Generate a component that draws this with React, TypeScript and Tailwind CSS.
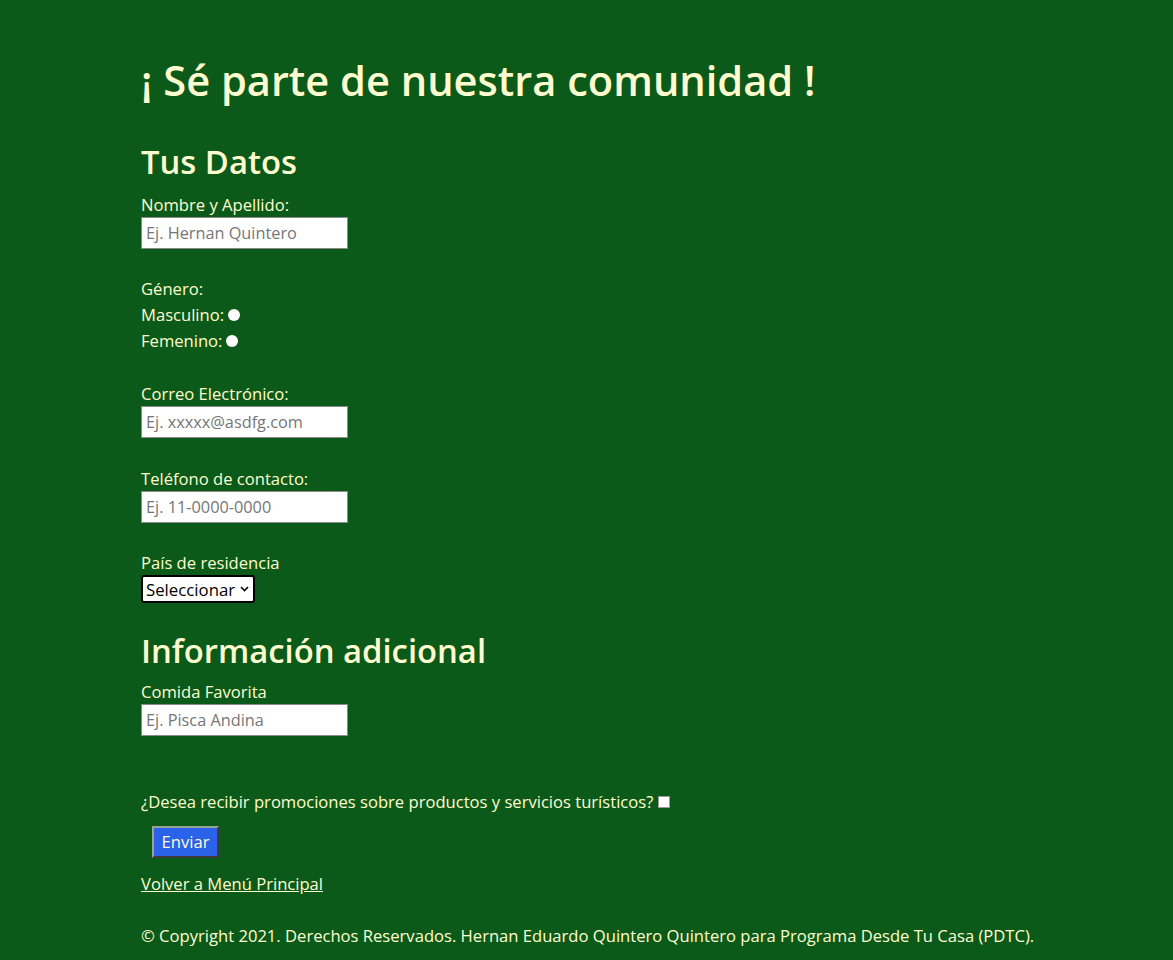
import React from "react";

const inputCls =
  "block w-[207px] h-[32px] bg-white border border-[#8a8a8a] px-[4px] text-[16.3px] text-black placeholder:text-[#767676] outline-none";

export default function App() {
  return (
    <div
      className="min-h-[960px] w-full bg-[#0b5a1a] text-[#fffdd0]"
      style={{ fontFamily: '"Open Sans", "Noto Sans", sans-serif' }}
    >
      <div className="pl-[141px] pt-[50px] text-[16.6px]">
        <h1 className="h-[60px] leading-[60px] text-[41.6px] font-semibold">
          ¡ Sé parte de nuestra comunidad !
        </h1>
        <h2 className="mt-[30px] h-[44px] leading-[44px] text-[32.8px] font-semibold">
          Tus Datos
        </h2>
        <div className="mt-[9px] h-[24px] leading-[24px]">Nombre y Apellido:</div>
        <input className={inputCls} placeholder="Ej. Hernan Quintero" />

        <div className="mt-[27px] h-[26px] leading-[26px]">Género:</div>
        <div className="flex h-[26px] items-center">
          <span>Masculino:</span>
          <input
            type="radio"
            name="g"
            className="ml-[4px] h-[12px] w-[12px] appearance-none rounded-full bg-white"
          />
        </div>
        <div className="flex h-[26px] items-center">
          <span>Femenino:</span>
          <input
            type="radio"
            name="g"
            className="ml-[4px] h-[12px] w-[12px] appearance-none rounded-full bg-white"
          />
        </div>

        <div className="mt-[28px] h-[24px] leading-[24px]">Correo Electrónico:</div>
        <input className={inputCls} placeholder="Ej. xxxxx@asdfg.com" />

        <div className="mt-[29px] h-[24px] leading-[24px]">Teléfono de contacto:</div>
        <input className={inputCls} placeholder="Ej. 11-0000-0000" />

        <div className="mt-[28px] h-[24px] leading-[24px]">País de residencia</div>
        <div className="relative h-[28px] w-[114px]">
          <select className="block h-[28px] w-[114px] appearance-none rounded-[3px] border-2 border-black bg-white pl-[3px] text-[16.8px] text-black outline-none">
            <option>Seleccionar</option>
          </select>
          <svg
            className="pointer-events-none absolute right-[6px] top-[11px]"
            width="9"
            height="6"
            viewBox="0 0 9 6"
          >
            <path d="M1 1 L4.5 4.5 L8 1" fill="none" stroke="black" strokeWidth="1.6" />
          </svg>
        </div>

        <h2 className="mt-[26px] h-[44px] leading-[44px] text-[32.8px] font-semibold">
          Información adicional
        </h2>
        <div className="mt-[7px] h-[24px] leading-[24px]">Comida Favorita</div>
        <input className={inputCls} placeholder="Ej. Pisca Andina" />

        <div className="mt-[54px] flex h-[24px] items-center">
          <span>¿Desea recibir promociones sobre productos y servicios turísticos?</span>
          <input
            type="checkbox"
            className="ml-[5px] h-[12px] w-[12px] appearance-none border border-[#9a9a9a] bg-white"
          />
        </div>

        <button className="ml-[11px] mt-[12px] block h-[32px] w-[67px] border-2 border-t-[#9aa39a] border-l-[#9aa39a] border-b-[#3a3a3a] border-r-[#3a3a3a] bg-[#2b62ea] text-[16.6px] text-[#fffdd0]">
          Enviar
        </button>

        <div className="mt-[14px] h-[24px] leading-[24px]">
          <a href="#" className="underline">
            Volver a Menú Principal
          </a>
        </div>

        <div className="mt-[28px] h-[24px] leading-[24px]">
          © Copyright 2021. Derechos Reservados. Hernan Eduardo Quintero Quintero para Programa
          Desde Tu Casa (PDTC).
        </div>
      </div>
    </div>
  );
}
